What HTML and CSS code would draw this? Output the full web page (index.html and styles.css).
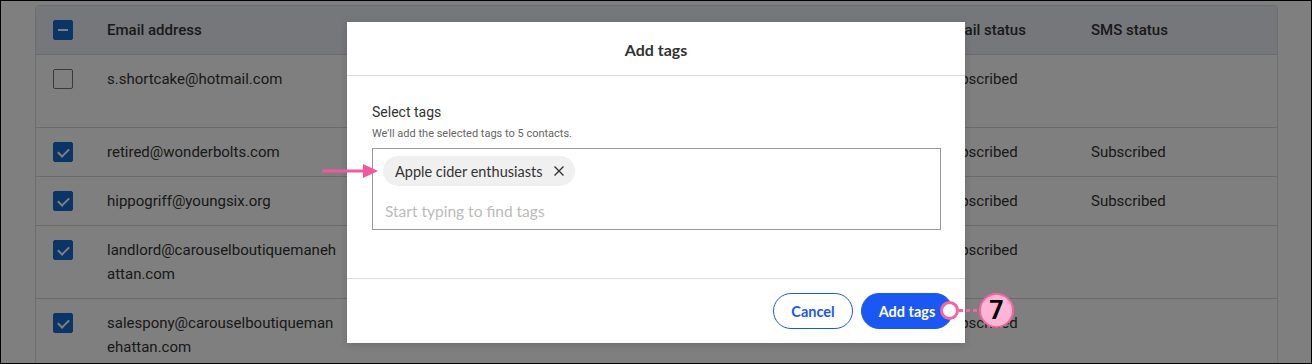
FILE: index.html
```html
<!DOCTYPE html>
<html lang="en">
<head>
  <meta charset="UTF-8">
  <title>Contacts - Add tags</title>
  <link rel="stylesheet" href="styles.css">
</head>
<body>
  <div class="stage">
    <div class="contacts-card">
      <div class="row head">
        <div class="cell check"><span class="box partial"></span></div>
        <div class="cell email">Email address</div>
        <div class="cell status">Email status</div>
        <div class="cell status">SMS status</div>
      </div>
      <div class="row tall">
        <div class="cell check"><span class="box"></span></div>
        <div class="cell email">s.shortcake@hotmail.com</div>
        <div class="cell status">Subscribed</div>
        <div class="cell status"></div>
      </div>
      <div class="row">
        <div class="cell check"><span class="box checked"></span></div>
        <div class="cell email">retired@wonderbolts.com</div>
        <div class="cell status">Subscribed</div>
        <div class="cell status">Subscribed</div>
      </div>
      <div class="row">
        <div class="cell check"><span class="box checked"></span></div>
        <div class="cell email">hippogriff@youngsix.org</div>
        <div class="cell status">Subscribed</div>
        <div class="cell status">Subscribed</div>
      </div>
      <div class="row tall">
        <div class="cell check"><span class="box checked"></span></div>
        <div class="cell email">landlord@carouselboutiquemanehattan.com</div>
        <div class="cell status">Subscribed</div>
        <div class="cell status"></div>
      </div>
      <div class="row tall">
        <div class="cell check"><span class="box checked"></span></div>
        <div class="cell email">salespony@carouselboutiquemanehattan.com</div>
        <div class="cell status">Subscribed</div>
        <div class="cell status"></div>
      </div>
    </div>

    <div class="overlay"></div>

    <div class="modal">
      <div class="modal-header">Add tags</div>
      <div class="modal-body">
        <div class="field-label">Select tags</div>
        <div class="field-help">We'll add the selected tags to 5 contacts.</div>
        <div class="tag-input">
          <span class="chip">Apple cider enthusiasts
            <svg class="chip-x" width="12" height="12" viewBox="0 0 12 12"><path d="M1.5 1.5 L10.5 10.5 M10.5 1.5 L1.5 10.5" stroke="#333" stroke-width="1.4" fill="none"/></svg>
          </span>
          <div class="placeholder">Start typing to find tags</div>
        </div>
      </div>
      <div class="modal-footer">
        <button class="btn btn-outline">Cancel</button>
        <button class="btn btn-primary">Add tags</button>
      </div>
    </div>

    <!-- callout arrow pointing at the chip -->
    <svg class="arrow" width="60" height="16" viewBox="0 0 60 16">
      <rect x="0" y="6.5" width="44" height="3" fill="#f5579d"/>
      <polygon points="41,1 56,8 41,15" fill="#f5579d"/>
    </svg>

    <!-- step marker -->
    <div class="step">
      <span class="step-dot"></span>
      <span class="step-line"></span>
      <span class="step-num">7</span>
    </div>
  </div>
</body>
</html>
```

FILE: styles.css
```css
* {
  box-sizing: border-box;
}
body {
  margin: 0;
  width: 1312px;
  height: 364px;
  border: 1px solid #000;
  background: #fff;
  font-family: Roboto, 'Liberation Sans', sans-serif;
  overflow: hidden;
}
.stage {
  position: relative;
  width: 1310px;
  height: 362px;
  overflow: hidden;
  padding: 4px 0 0 34px;
}
.contacts-card {
  width: 1243px;
  border: 1px solid #d8dcdf;
  border-radius: 4px;
  background: #fff;
  color: #333;
  font-size: 15px;
}
.row {
  display: grid;
  grid-template-columns: 71px 836px 148px 1fr;
  border-top: 1px solid #d3d9db;
  min-height: 49px;
}
.row.head {
  border-top: none;
  background: #eceef4;
  border-radius: 4px 4px 0 0;
  font-weight: 500;
  min-height: 48px;
}
.row.tall {
  min-height: 73px;
}
.cell {
  padding: 12px 0;
  line-height: 24px;
}
.cell.check {
  padding-left: 17px;
}
.cell.email {
  width: 231px;
  word-break: break-all;
}
.row.head .cell.email {
  word-break: normal;
}
.box {
  display: block;
  width: 20px;
  height: 20px;
  margin-top: 2px;
  border: 1px solid #757575;
  border-radius: 2px;
  background: #fff;
  position: relative;
}
.box.checked,
.box.partial {
  background: #176acc;
  border-color: #176acc;
}
.box.partial::after {
  content: "";
  position: absolute;
  left: 4px;
  top: 8px;
  width: 10px;
  height: 2px;
  background: #fff;
}
.box.checked::after {
  content: "";
  position: absolute;
  left: 6px;
  top: 3px;
  width: 5px;
  height: 9px;
  border: solid #fff;
  border-width: 0 2px 2px 0;
  transform: rotate(45deg);
}
.overlay {
  position: absolute;
  inset: 0;
  background: rgba(0, 0, 0, 0.5);
}
.modal {
  position: absolute;
  left: 346px;
  top: 21px;
  width: 618px;
  height: 321px;
  background: #fff;
  display: flex;
  flex-direction: column;
  box-shadow: 0 2px 8px rgba(0, 0, 0, 0.15);
}
.modal-header {
  height: 54px;
  border-bottom: 1px solid #dddddd;
  display: flex;
  align-items: center;
  justify-content: center;
  font-family: Lato, 'Open Sans', sans-serif;
  font-weight: 700;
  font-size: 16px;
  color: #333;
  padding-top: 1px;
}
.modal-body {
  flex: 1;
  padding: 27px 24px 0 25px;
}
.field-label {
  font-size: 14px;
  color: #333;
  line-height: 18px;
}
.field-help {
  font-size: 11px;
  color: #666;
  margin-top: 6px;
  line-height: 14px;
}
.tag-input {
  margin-top: 7px;
  height: 82px;
  border: 1px solid #999;
  padding: 7px 10px 0 10px;
  font-family: Lato, 'Open Sans', sans-serif;
}
.chip {
  display: inline-flex;
  align-items: center;
  gap: 11px;
  height: 30px;
  padding: 0 10px 0 12px;
  background: #f0f0f0;
  border-radius: 15px;
  font-size: 14.5px;
  color: #333;
}
.chip-x {
  display: block;
}
.placeholder {
  margin-top: 12px;
  padding-left: 2px;
  font-size: 15.5px;
  color: #bbbbbb;
  line-height: 26px;
}
.modal-footer {
  height: 65px;
  border-top: 1px solid #dddddd;
  display: flex;
  justify-content: flex-end;
  align-items: center;
  gap: 8px;
  padding: 0 12px 0 0;
}
.btn {
  height: 36px;
  border-radius: 18px;
  font-family: Lato, 'Open Sans', sans-serif;
  font-weight: 700;
  font-size: 14.5px;
  cursor: pointer;
}
.btn-outline {
  width: 80px;
  background: #fff;
  color: #1a56f0;
  border: 1px solid #1a56f0;
}
.btn-primary {
  width: 92px;
  background: #1b57f2;
  color: #fff;
  border: 1px solid #1b57f2;
}
.arrow {
  position: absolute;
  left: 321px;
  top: 162px;
}
.step {
  position: absolute;
  left: 939px;
  top: 292px;
  display: flex;
  align-items: center;
}
.step-dot {
  width: 19px;
  height: 19px;
  border-radius: 50%;
  background: #fff;
  border: 3px solid #f5659f;
}
.step-line {
  width: 20px;
  height: 3px;
  background: repeating-linear-gradient(90deg, #f5659f 0 4px, transparent 4px 7px);
}
.step-num {
  width: 35px;
  height: 35px;
  border-radius: 50%;
  background: #ffb5d6;
  border: 2px solid #f5659f;
  display: flex;
  align-items: center;
  justify-content: center;
  font-family: Roboto, 'Liberation Sans', sans-serif;
  font-weight: 700;
  font-size: 25px;
  color: #000;
}
```
